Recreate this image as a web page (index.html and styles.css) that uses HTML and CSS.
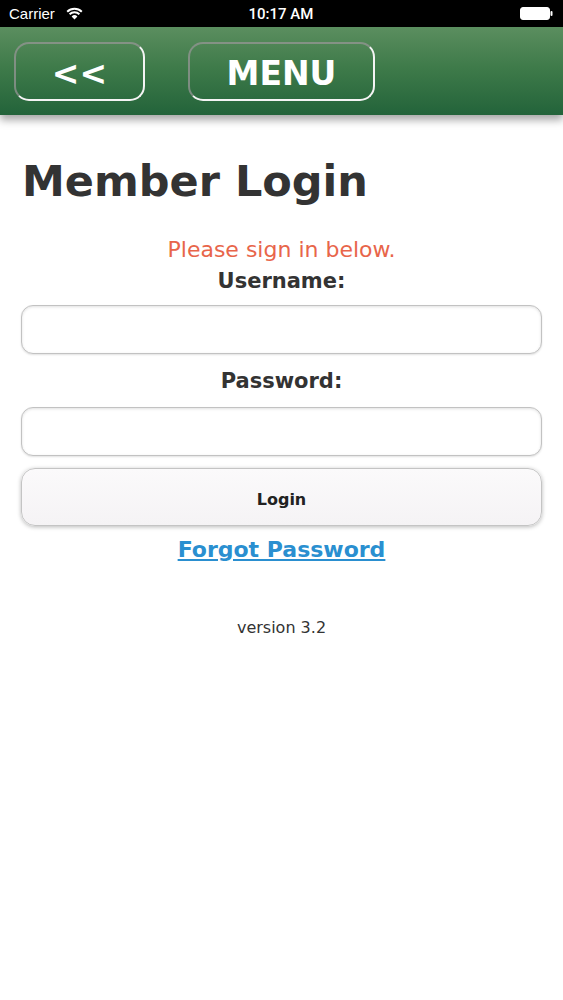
FILE: index.html
```html
<!DOCTYPE html>
<html>
<head>
<meta charset="utf-8">
<link rel="stylesheet" href="styles.css">
</head>
<body>
<div class="statusbar">
  <div class="sb-left">
    <span class="carrier">Carrier</span>
    <svg class="wifi" width="17" height="13" viewBox="0 0 17 13">
      <path d="M8.5 12.5 L5.6 9.4 A4.2 4.2 0 0 1 11.4 9.4 Z" fill="#fff"/>
      <path d="M3.6 7.3 A7 7 0 0 1 13.4 7.3" stroke="#fff" stroke-width="2" fill="none"/>
      <path d="M1.2 4.8 A10.5 10.5 0 0 1 15.8 4.8" stroke="#fff" stroke-width="2" fill="none"/>
    </svg>
  </div>
  <div class="time">10:17 AM</div>
  <div class="sb-right">
    <svg width="33" height="13" viewBox="0 0 33 13">
      <rect x="0.5" y="0.5" width="29" height="12" rx="2.5" fill="#fff" stroke="#fff"/>
      <rect x="30.5" y="4" width="2" height="5" rx="1" fill="#fff"/>
    </svg>
  </div>
</div>
<header class="topbar">
  <a class="navbtn back">&lt;&lt;</a>
  <a class="navbtn menu">MENU</a>
</header>
<main class="content">
  <h1 class="title">Member Login</h1>
  <form class="login">
    <div class="notice">Please sign in below.</div>
    <label class="label">Username:</label>
    <input class="field" type="text">
    <label class="label pw">Password:</label>
    <input class="field" type="password">
    <button class="submit" type="button">Login</button>
    <a class="forgot" href="#">Forgot Password</a>
    <div class="version">version 3.2</div>
  </form>
</main>
</body>
</html>
```
FILE: styles.css
```css
html, body {
  margin: 0;
  padding: 0;
  background: #fff;
}
body {
  font-family: "DejaVu Sans", Verdana, sans-serif;
  color: #333;
  width: 563px;
}
.statusbar {
  height: 27px;
  background: #000;
  color: #fff;
  display: flex;
  align-items: center;
  justify-content: space-between;
  padding: 0 9px;
  font-family: "Liberation Sans", Arial, sans-serif;
  font-size: 15px;
  box-sizing: border-box;
}
.sb-left, .sb-right {
  width: 120px;
  display: flex;
  align-items: center;
}
.sb-right {
  justify-content: flex-end;
  padding-right: 1px;
}
.wifi {
  margin-left: 11px;
  margin-top: -1px;
}
.time {
  font-family: Roboto, "Liberation Sans", sans-serif;
  font-weight: 500;
  font-size: 15px;
}
.topbar {
  height: 88px;
  background: linear-gradient(to bottom, #5b8e5f 0%, #3f7b4a 45%, #23633a 100%);
  box-shadow: 0 5px 8px rgba(0,0,0,0.35);
  display: flex;
  align-items: flex-start;
  gap: 43px;
  padding: 15px 0 0 14px;
  box-sizing: border-box;
  position: relative;
  z-index: 1;
}
.navbtn {
  height: 59px;
  box-sizing: border-box;
  border: 2px solid;
  border-color: rgba(150,150,150,0.75) #f4f4f4 #f4f4f4 rgba(150,150,150,0.75);
  border-radius: 15px;
  display: flex;
  align-items: center;
  justify-content: center;
  color: #fff;
  font-weight: bold;
  font-size: 33px;
  text-decoration: none;
  padding-top: 3px;
}
.back {
  width: 131px;
}
.menu {
  width: 187px;
}
.content {
  padding: 0 21px;
}
.title {
  margin: 40px 0 0 1px;
  font-size: 43px;
  line-height: 52px;
  font-weight: bold;
  color: #333;
}
.login {
  display: flex;
  flex-direction: column;
  align-items: center;
  margin-top: 30px;
}
.notice {
  color: #e8654a;
  font-size: 22px;
  line-height: 26px;
}
.label {
  font-weight: bold;
  font-size: 21px;
  line-height: 26px;
  margin-top: 5px;
}
.label.pw {
  margin-top: 14px;
}
.field {
  align-self: stretch;
  height: 49px;
  margin: 11px 0 0;
  box-sizing: border-box;
  border: 1px solid #c2c2c2;
  border-radius: 12px;
  background: #fff;
  box-shadow: inset 0 1px 3px rgba(0,0,0,0.12), 0 1px 2px rgba(0,0,0,0.12);
  font-size: 18px;
}
.field + .label {
  margin-top: 14px;
}
.label.pw + .field {
  margin-top: 13px;
}
.submit {
  align-self: stretch;
  height: 58px;
  margin-top: 12px;
  box-sizing: border-box;
  border: 1px solid #c4c4c4;
  border-radius: 14px;
  background: linear-gradient(to bottom, #fbfafb, #f5f3f5);
  box-shadow: 0 1px 4px rgba(0,0,0,0.28);
  font-family: "DejaVu Sans", Verdana, sans-serif;
  font-weight: bold;
  font-size: 16px;
  color: #222;
  padding: 4px 0 0;
}
.forgot {
  margin-top: 11px;
  font-size: 22px;
  line-height: 26px;
  font-weight: bold;
  color: #2a8fd0;
  text-decoration: underline;
}
.version {
  margin-top: 55px;
  font-size: 16px;
  line-height: 20px;
  color: #333;
}
```
